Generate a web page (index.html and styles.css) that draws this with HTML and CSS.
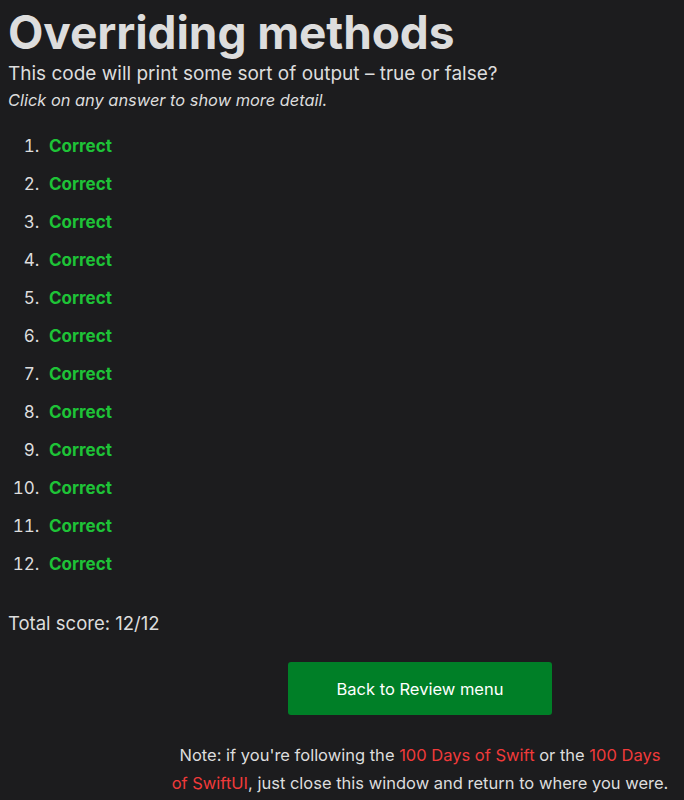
FILE: index.html
```html
<!DOCTYPE html>
<html lang="en">
<head>
<meta charset="utf-8">
<title>Overriding methods</title>
<link rel="stylesheet" href="styles.css">
</head>
<body>
<main class="page">
  <h1 class="title">Overriding methods</h1>
  <p class="lead">This code will print some sort of output – true or false?</p>
  <p class="hint">Click on any answer to show more detail.</p>
  <ol class="answers">
    <li><a class="correct" href="#">Correct</a></li>
    <li><a class="correct" href="#">Correct</a></li>
    <li><a class="correct" href="#">Correct</a></li>
    <li><a class="correct" href="#">Correct</a></li>
    <li><a class="correct" href="#">Correct</a></li>
    <li><a class="correct" href="#">Correct</a></li>
    <li><a class="correct" href="#">Correct</a></li>
    <li><a class="correct" href="#">Correct</a></li>
    <li><a class="correct" href="#">Correct</a></li>
    <li><a class="correct" href="#">Correct</a></li>
    <li><a class="correct" href="#">Correct</a></li>
    <li><a class="correct" href="#">Correct</a></li>
  </ol>
  <p class="score">Total score: 12/12</p>
  <div class="footer">
    <a class="button" href="#">Back to Review menu</a>
    <p class="note">Note: if you're following the <a href="#">100 Days of Swift</a> or the <a href="#">100 Days of SwiftUI</a>, just close this window and return to where you were.</p>
  </div>
</main>
</body>
</html>
```
FILE: styles.css
```css
html, body {
  background: #1c1c1e;
}
body {
  margin: 0;
  padding: 0 8px;
  color: #dddddd;
  font-family: Inter, "Noto Sans", sans-serif;
}
.title {
  margin: 3px 0 0 0;
  font-size: 46px;
  font-weight: 700;
  line-height: 58px;
  letter-spacing: -0.1px;
}
.lead {
  margin: 0;
  font-size: 19px;
  line-height: 26px;
}
.hint {
  margin: 0;
  font-size: 16.4px;
  line-height: 26px;
  font-style: italic;
}
.answers {
  margin: 22px 0 0 0;
  padding-left: 36px;
  font-size: 17px;
}
.answers li {
  line-height: 22px;
  margin-bottom: 16px;
  padding-left: 5px;
}
.correct {
  color: #1ec337;
  font-weight: 700;
  text-decoration: none;
}
.score {
  margin: 36px 0 0 0;
  font-size: 18.5px;
  line-height: 24px;
}
.footer {
  margin: 27px 0 0 162px;
  width: 500px;
  display: flex;
  flex-direction: column;
  align-items: center;
}
.button {
  display: flex;
  align-items: center;
  justify-content: center;
  width: 264px;
  height: 53px;
  background: #007f27;
  border-radius: 3px;
  color: #ffffff;
  font-size: 16.5px;
  text-decoration: none;
}
.note {
  margin: 26px 0 0 0;
  text-align: center;
  font-size: 16.5px;
  line-height: 28px;
}
.note a {
  color: #f03a3a;
  text-decoration: none;
}
```
